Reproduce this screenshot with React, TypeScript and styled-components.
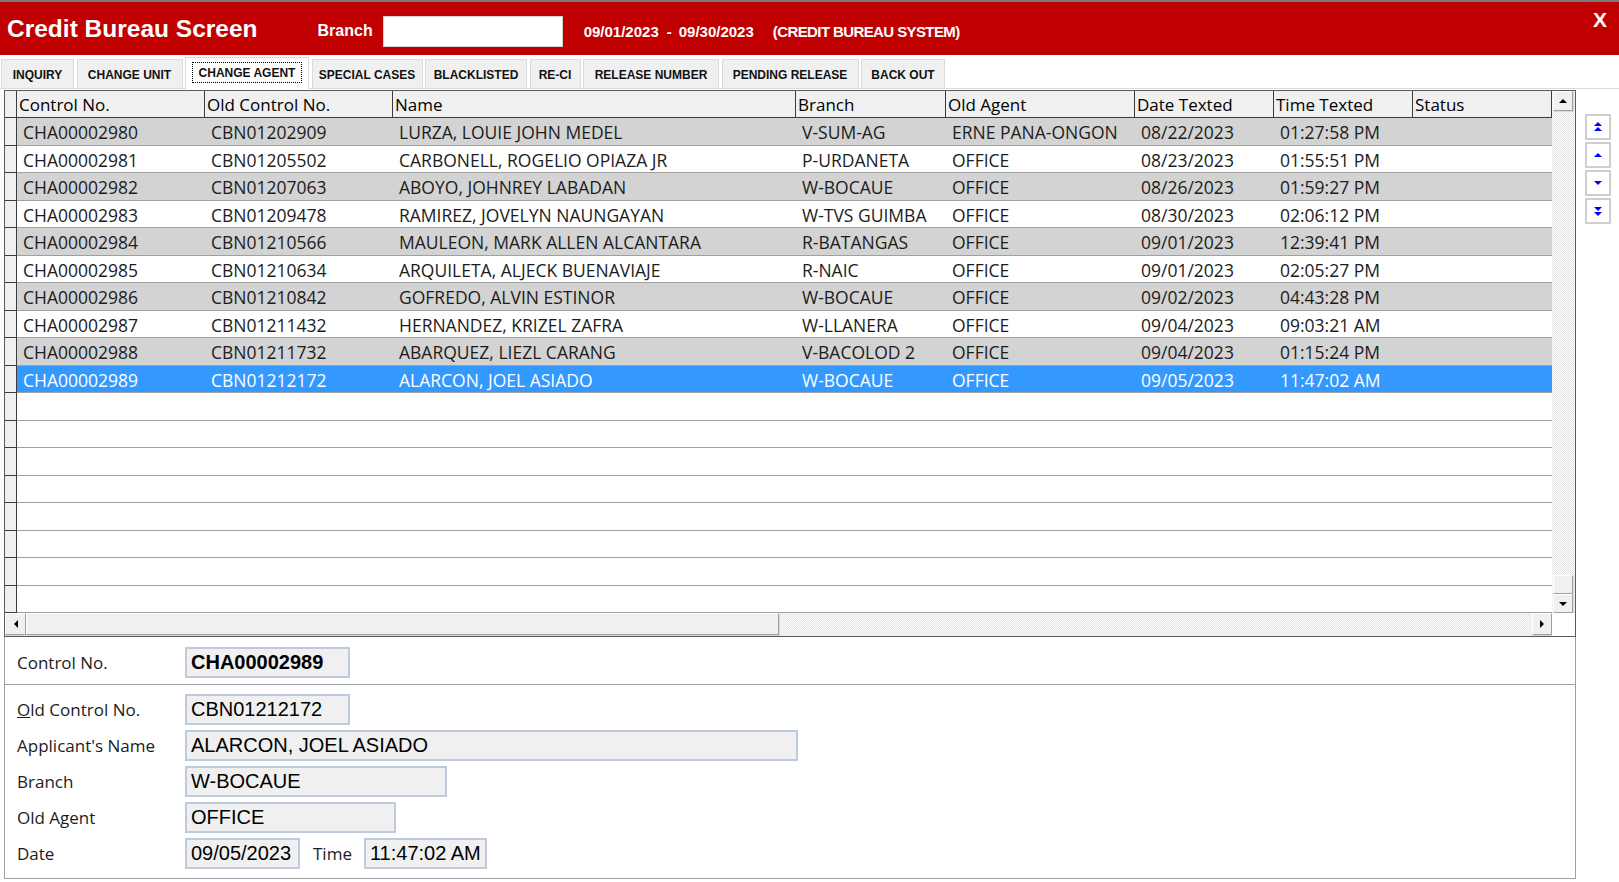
import React from 'react';
import styled, { createGlobalStyle, css } from 'styled-components';

const GlobalStyle = createGlobalStyle`
  html, body {
    margin: 0;
    padding: 0;
    background: #ffffff;
  }
  body {
    font-family: "Open Sans", "Liberation Sans", sans-serif;
  }
  * {
    box-sizing: border-box;
  }
`;

// Column widths of the data grid (row selector first)
const COLUMNS = '12px 188px 188px 403px 150px 189px 139px 139px 139px';
const ROW_HEIGHT = 27.5;

const Screen = styled.div`
  width: 1619px;
  height: 882px;
  overflow: hidden;
  background: #ffffff;
  display: flex;
  flex-direction: column;
`;

// Title bar
const TitleBar = styled.header`
  height: 55px;
  border-top: 2px solid #7a7a7a;
  background: #c00000;
  color: #ffffff;
  display: flex;
  align-items: center;
  padding: 0 12px 0 7px;
  font-family: "Liberation Sans", Arial, sans-serif;
  font-weight: bold;
`;

const Title = styled.h1`
  margin: 2px 0 0;
  font-size: 24.5px;
  font-weight: bold;
  line-height: 1;
`;

const BranchLabel = styled.span`
  margin: 4px 0 0 60px;
  font-size: 16px;
`;

const BranchInput = styled.div`
  width: 180px;
  height: 31px;
  margin: 5px 0 0 10px;
  background: #ffffff;
  border: 1px solid #d4d4d4;
`;

const Period = styled.div`
  display: flex;
  align-items: baseline;
  margin: 5px 0 0 21px;
  font-size: 15px;
`;

const Dash = styled.span`
  margin: 0 7px 0 8px;
`;

const SystemName = styled.span`
  margin-left: 19px;
  letter-spacing: -0.6px;
`;

const CloseX = styled.span`
  margin-left: auto;
  align-self: flex-start;
  margin-top: 7px;
  font-size: 21px;
  line-height: 21px;
`;

// Tabs
const TabStrip = styled.nav`
  margin-top: 2px;
  height: 32px;
  display: flex;
  align-items: flex-end;
  gap: 2.5px;
  padding-left: 1px;
  border-bottom: 1px solid #d9d9d9;
`;

const Tab = styled.div<{ $w: number; $active?: boolean }>`
  width: ${({ $w }) => $w}px;
  height: 29px;
  display: flex;
  align-items: center;
  justify-content: center;
  padding-top: 2px;
  background: #f0f0f0;
  border: 1px solid #dadada;
  border-bottom: none;
  font-family: "Liberation Sans", Arial, sans-serif;
  font-weight: bold;
  font-size: 12px;
  color: #111111;
  white-space: nowrap;

  ${({ $active }) =>
    $active &&
    css`
      height: 32px;
      margin-bottom: -1px;
      background: #ffffff;
      position: relative;
      padding-top: 0;
      padding-bottom: 3px;
    `}
`;

const FocusRect = styled.span`
  border: 1px dotted #000000;
  padding: 3px 6px 2px;
`;

// Main area
const Main = styled.div`
  display: flex;
  padding-left: 4px;
`;

const LeftColumn = styled.div`
  width: 1572px;
  display: flex;
  flex-direction: column;
`;

const GridFrame = styled.div`
  margin-top: 1px;
  border: 1px solid #5a5a5a;
  display: flex;
  flex-direction: column;
`;

const GridBody = styled.div`
  display: flex;
`;

const Table = styled.div`
  width: 1547px;
  display: flex;
  flex-direction: column;
`;

const HeaderRow = styled.div`
  display: grid;
  grid-template-columns: ${COLUMNS};
  height: 27px;
  background: #f0f0f0;
  border-bottom: 1px solid #3c3c3c;
`;

const HeaderCell = styled.div`
  border-right: 1px solid #3c3c3c;
  padding: 2px 0 0 2px;
  font-size: 17px;
  line-height: 24px;
  color: #000000;
  white-space: nowrap;
  overflow: hidden;
`;

const Row = styled.div<{ $tone: 'grey' | 'white' | 'selected' }>`
  display: grid;
  grid-template-columns: ${COLUMNS};
  height: ${ROW_HEIGHT}px;
  background: ${({ $tone }) =>
    $tone === 'grey' ? '#d3d3d3' : $tone === 'selected' ? '#3399ff' : '#ffffff'};
  color: ${({ $tone }) => ($tone === 'selected' ? '#ffffff' : '#1c1c1c')};
`;

const SelectorCell = styled.div`
  background: #f0f0f0;
  border-right: 1px solid #3c3c3c;
  border-bottom: 1px solid #3c3c3c;
`;

const Cell = styled.div`
  border-bottom: 1px solid #a0a0a0;
  padding: 2px 0 0 6px;
  font-size: 17.5px;
  line-height: 24px;
  white-space: nowrap;
  overflow: hidden;
`;

// Scrollbars
const dotted = css`
  background: repeating-conic-gradient(#e6e6e6 0 25%, #fbfbfb 0 50%) 0 0 / 2px 2px;
`;

const raised = css`
  background: #f0f0f0;
  border-top: 1px solid #ffffff;
  border-left: 1px solid #ffffff;
  border-right: 1px solid #a0a0a0;
  border-bottom: 1px solid #a0a0a0;
  box-shadow: 1px 1px 0 #d8d8d8;
`;

const VScroll = styled.div`
  width: 23px;
  padding: 0 2px 0 1px;
  display: flex;
  flex-direction: column;
  ${dotted};
`;

const ScrollButton = styled.div<{ $w?: number; $h?: number }>`
  width: ${({ $w }) => $w ?? 20}px;
  height: ${({ $h }) => $h ?? 20}px;
  flex-shrink: 0;
  display: flex;
  align-items: center;
  justify-content: center;
  ${raised};
`;

const Arrow = styled.span<{ $dir: 'up' | 'down' | 'left' | 'right' }>`
  width: 0;
  height: 0;
  ${({ $dir }) =>
    $dir === 'up'
      ? css`border-left: 4px solid transparent; border-right: 4px solid transparent; border-bottom: 4px solid #000;`
      : $dir === 'down'
      ? css`border-left: 4px solid transparent; border-right: 4px solid transparent; border-top: 4px solid #000;`
      : $dir === 'left'
      ? css`border-top: 4px solid transparent; border-bottom: 4px solid transparent; border-right: 4px solid #000;`
      : css`border-top: 4px solid transparent; border-bottom: 4px solid transparent; border-left: 4px solid #000;`}
`;

const ScrollTrack = styled.div`
  flex: 1;
`;

const VThumb = styled.div`
  height: 19px;
  flex-shrink: 0;
  ${raised};
`;

const HScrollRow = styled.div`
  display: flex;
  height: 23px;
`;

const HScroll = styled.div`
  width: 1547px;
  display: flex;
  align-items: flex-start;
  ${dotted};
`;

const HThumb = styled.div`
  width: 753px;
  height: 22px;
  ${raised};
`;

const Corner = styled.div`
  flex: 1;
  background: #ffffff;
`;

// Detail form
const FormPanel = styled.section`
  border: 1px solid #a0a0a0;
  border-top: none;
  display: flex;
  flex-direction: column;
`;

const ControlSection = styled.div`
  display: flex;
  align-items: center;
  padding: 10px 0 6px 12px;
  border-bottom: 1px solid #a0a0a0;
`;

const FieldsSection = styled.div`
  display: flex;
  flex-direction: column;
  gap: 5px;
  padding: 9px 0 9px 12px;
`;

const FieldRow = styled.div`
  display: flex;
  align-items: center;
  height: 31px;
`;

const Label = styled.label`
  width: 168px;
  font-size: 17px;
  color: #1c1c1c;
  white-space: nowrap;
`;

const InlineLabel = styled.label`
  margin: 0 12px 0 13px;
  font-size: 17px;
  color: #1c1c1c;
`;

const Box = styled.div<{ $w: number; $bold?: boolean }>`
  width: ${({ $w }) => $w}px;
  height: 31px;
  display: flex;
  align-items: center;
  padding-left: 4px;
  background: #f0f0f0;
  border: 2px solid #bdcbdd;
  font-family: "Liberation Sans", Arial, sans-serif;
  font-size: 20px;
  font-weight: ${({ $bold }) => ($bold ? 'bold' : 'normal')};
  color: #000000;
  white-space: nowrap;
`;

// Record navigation buttons
const NavColumn = styled.div`
  margin-left: 9px;
  padding-top: 25px;
  display: flex;
  flex-direction: column;
  gap: 2px;
`;

const NavButton = styled.button`
  width: 26px;
  height: 26px;
  padding: 0;
  display: flex;
  align-items: center;
  justify-content: center;
  background: #ffffff;
  border: 2px solid #cfcfcf;
`;

const NavIcon = ({ kind }: { kind: 'first' | 'prev' | 'next' | 'last' }) => {
  const shapes = {
    first: ['5,1 9,5 1,5', '5,6 9,10 1,10'],
    prev: ['5,4 9,8 1,8'],
    next: ['1,4 9,4 5,8'],
    last: ['1,2 9,2 5,6', '1,7 9,7 5,11'],
  }[kind];
  return (
    <svg width="10" height="12" viewBox="0 0 10 12">
      {shapes.map((p) => (
        <polygon key={p} points={p} fill="#0000ff" />
      ))}
    </svg>
  );
};

const TABS = [
  { label: 'INQUIRY', w: 73 },
  { label: 'CHANGE UNIT', w: 106 },
  { label: 'CHANGE AGENT', w: 124, active: true },
  { label: 'SPECIAL CASES', w: 111 },
  { label: 'BLACKLISTED', w: 102 },
  { label: 'RE-CI', w: 51 },
  { label: 'RELEASE NUMBER', w: 136 },
  { label: 'PENDING RELEASE', w: 137 },
  { label: 'BACK OUT', w: 84 },
];

const HEADERS = [
  'Control No.',
  'Old Control No.',
  'Name',
  'Branch',
  'Old Agent',
  'Date Texted',
  'Time Texted',
  'Status',
];

const RECORDS = [
  ['CHA00002980', 'CBN01202909', 'LURZA, LOUIE JOHN MEDEL', 'V-SUM-AG', 'ERNE PANA-ONGON', '08/22/2023', '01:27:58 PM'],
  ['CHA00002981', 'CBN01205502', 'CARBONELL, ROGELIO OPIAZA JR', 'P-URDANETA', 'OFFICE', '08/23/2023', '01:55:51 PM'],
  ['CHA00002982', 'CBN01207063', 'ABOYO, JOHNREY LABADAN', 'W-BOCAUE', 'OFFICE', '08/26/2023', '01:59:27 PM'],
  ['CHA00002983', 'CBN01209478', 'RAMIREZ, JOVELYN NAUNGAYAN', 'W-TVS GUIMBA', 'OFFICE', '08/30/2023', '02:06:12 PM'],
  ['CHA00002984', 'CBN01210566', 'MAULEON, MARK ALLEN ALCANTARA', 'R-BATANGAS', 'OFFICE', '09/01/2023', '12:39:41 PM'],
  ['CHA00002985', 'CBN01210634', 'ARQUILETA, ALJECK BUENAVIAJE', 'R-NAIC', 'OFFICE', '09/01/2023', '02:05:27 PM'],
  ['CHA00002986', 'CBN01210842', 'GOFREDO, ALVIN ESTINOR', 'W-BOCAUE', 'OFFICE', '09/02/2023', '04:43:28 PM'],
  ['CHA00002987', 'CBN01211432', 'HERNANDEZ, KRIZEL ZAFRA', 'W-LLANERA', 'OFFICE', '09/04/2023', '09:03:21 AM'],
  ['CHA00002988', 'CBN01211732', 'ABARQUEZ, LIEZL CARANG', 'V-BACOLOD 2', 'OFFICE', '09/04/2023', '01:15:24 PM'],
  ['CHA00002989', 'CBN01212172', 'ALARCON, JOEL ASIADO', 'W-BOCAUE', 'OFFICE', '09/05/2023', '11:47:02 AM'],
];

const SELECTED = 9;
const EMPTY_ROWS = 8;

export default function App() {
  const current = RECORDS[SELECTED];

  return (
    <Screen>
      <GlobalStyle />

      <TitleBar>
        <Title>Credit Bureau Screen</Title>
        <BranchLabel>Branch</BranchLabel>
        <BranchInput />
        <Period>
          <span>09/01/2023</span>
          <Dash>-</Dash>
          <span>09/30/2023</span>
          <SystemName>(CREDIT BUREAU SYSTEM)</SystemName>
        </Period>
        <CloseX>X</CloseX>
      </TitleBar>

      <TabStrip>
        {TABS.map((t) => (
          <Tab key={t.label} $w={t.w} $active={t.active}>
            {t.active ? <FocusRect>{t.label}</FocusRect> : t.label}
          </Tab>
        ))}
      </TabStrip>

      <Main>
        <LeftColumn>
          <GridFrame>
            <GridBody>
              <Table>
                <HeaderRow>
                  <HeaderCell />
                  {HEADERS.map((h) => (
                    <HeaderCell key={h}>{h}</HeaderCell>
                  ))}
                </HeaderRow>

                {RECORDS.map((r, i) => (
                  <Row
                    key={r[0]}
                    $tone={i === SELECTED ? 'selected' : i % 2 === 0 ? 'grey' : 'white'}
                  >
                    <SelectorCell />
                    {r.map((v, j) => (
                      <Cell key={j}>{v}</Cell>
                    ))}
                    <Cell />
                  </Row>
                ))}

                {Array.from({ length: EMPTY_ROWS }).map((_, i) => (
                  <Row key={`empty-${i}`} $tone="white">
                    <SelectorCell />
                    {HEADERS.map((h) => (
                      <Cell key={h} />
                    ))}
                  </Row>
                ))}
              </Table>

              <VScroll>
                <ScrollButton>
                  <Arrow $dir="up" />
                </ScrollButton>
                <ScrollTrack />
                <VThumb />
                <ScrollButton $h={19}>
                  <Arrow $dir="down" />
                </ScrollButton>
              </VScroll>
            </GridBody>

            <HScrollRow>
              <HScroll>
                <ScrollButton $w={21} $h={22}>
                  <Arrow $dir="left" />
                </ScrollButton>
                <HThumb />
                <ScrollTrack />
                <ScrollButton $h={22}>
                  <Arrow $dir="right" />
                </ScrollButton>
              </HScroll>
              <Corner />
            </HScrollRow>
          </GridFrame>

          <FormPanel>
            <ControlSection>
              <Label>Control No.</Label>
              <Box $w={165} $bold>
                {current[0]}
              </Box>
            </ControlSection>

            <FieldsSection>
              <FieldRow>
                <Label>
                  <u>O</u>ld Control No.
                </Label>
                <Box $w={165}>{current[1]}</Box>
              </FieldRow>
              <FieldRow>
                <Label>Applicant's Name</Label>
                <Box $w={613}>{current[2]}</Box>
              </FieldRow>
              <FieldRow>
                <Label>Branch</Label>
                <Box $w={262}>{current[3]}</Box>
              </FieldRow>
              <FieldRow>
                <Label>Old Agent</Label>
                <Box $w={211}>{current[4]}</Box>
              </FieldRow>
              <FieldRow>
                <Label>Date</Label>
                <Box $w={115}>{current[5]}</Box>
                <InlineLabel>Time</InlineLabel>
                <Box $w={123}>{current[6]}</Box>
              </FieldRow>
            </FieldsSection>
          </FormPanel>
        </LeftColumn>

        <NavColumn>
          <NavButton aria-label="First record">
            <NavIcon kind="first" />
          </NavButton>
          <NavButton aria-label="Previous record">
            <NavIcon kind="prev" />
          </NavButton>
          <NavButton aria-label="Next record">
            <NavIcon kind="next" />
          </NavButton>
          <NavButton aria-label="Last record">
            <NavIcon kind="last" />
          </NavButton>
        </NavColumn>
      </Main>
    </Screen>
  );
}
